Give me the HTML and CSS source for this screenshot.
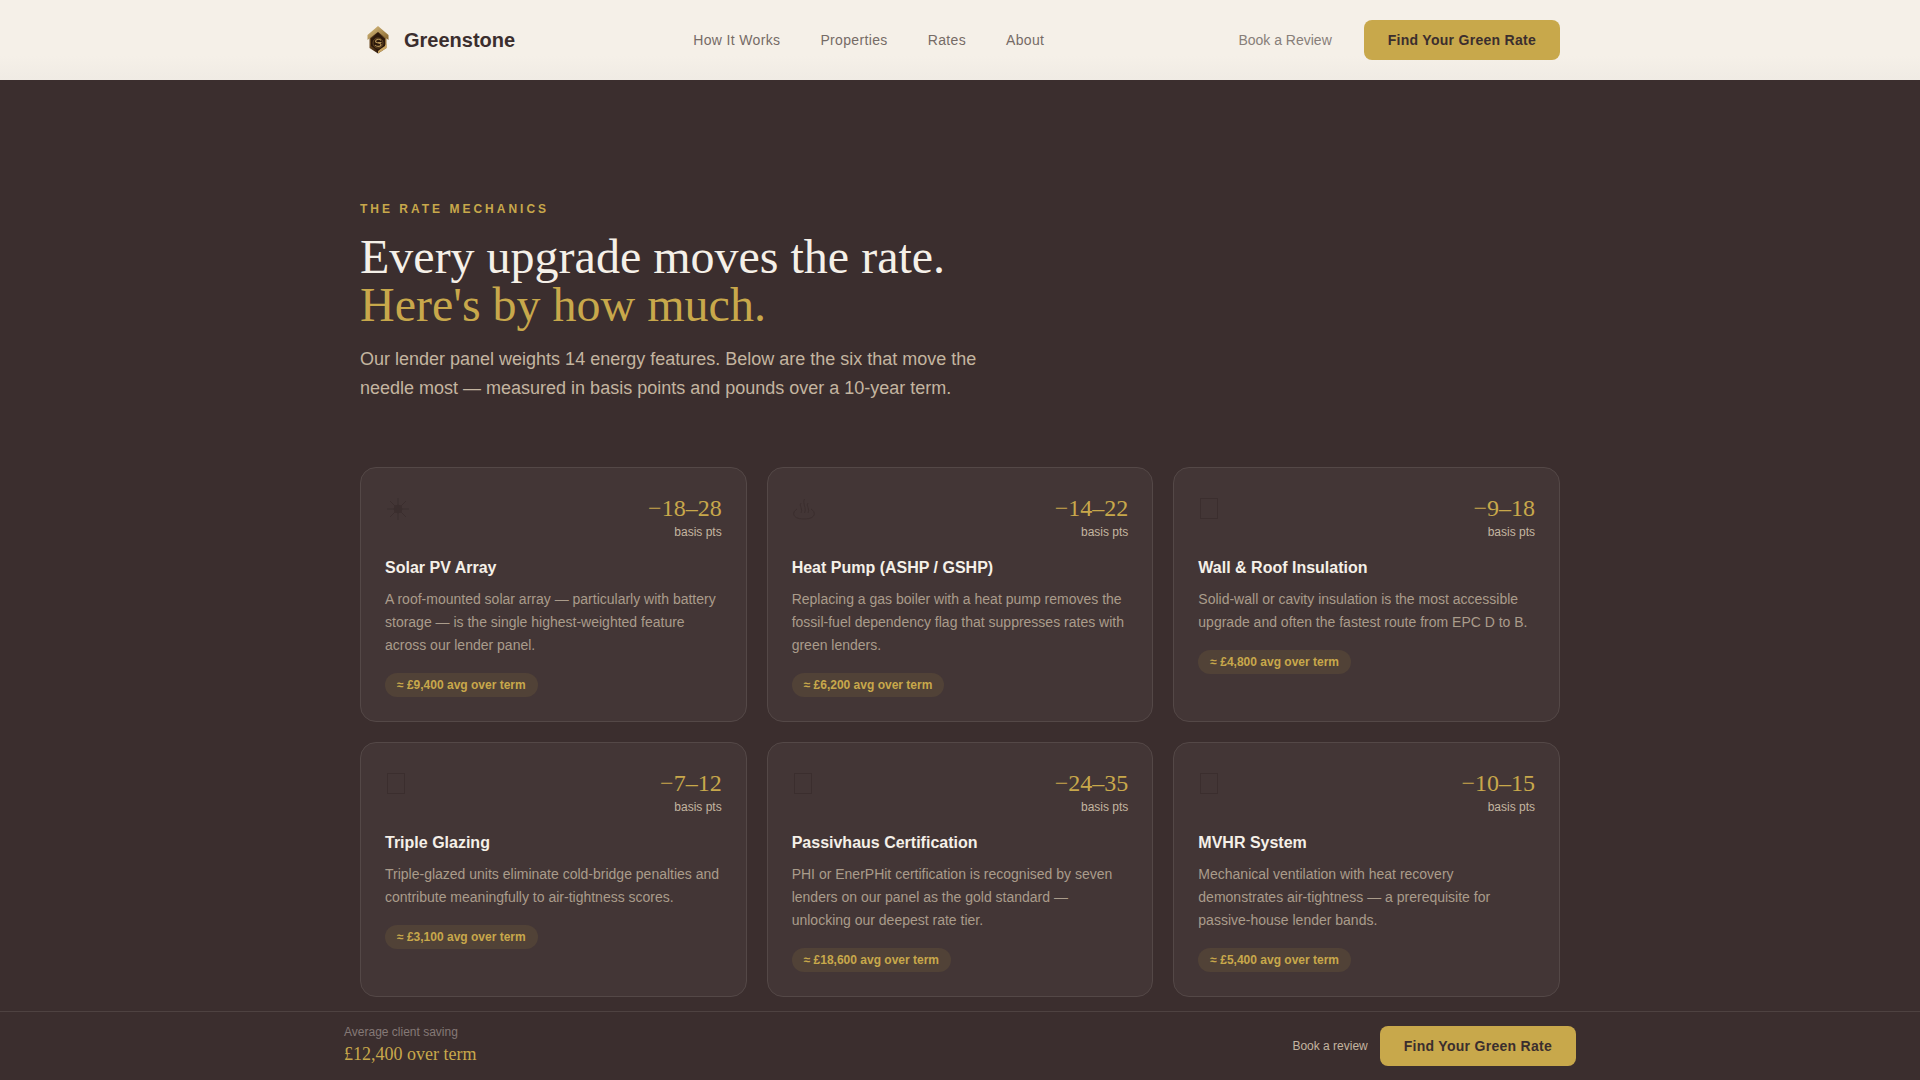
FILE: index.html
```html
<!DOCTYPE html>
<html lang="en">
  <head>
    <meta charset="UTF-8" />
    <meta name="viewport" content="width=device-width, initial-scale=1.0" />
    <title>Greenstone</title>
    <link rel="stylesheet" href="styles.css">
  </head>
  <body>
    <header class="site-header">
      <div class="header-inner">
        <a class="logo" href="#">
          <svg class="logo-mark" viewBox="0 0 36 36" aria-hidden="true">
            <defs>
              <linearGradient id="gold" x1="0" y1="0" x2="1" y2="1">
                <stop offset="0" stop-color="#dcc183" />
                <stop offset="1" stop-color="#86642c" />
              </linearGradient>
              <linearGradient id="shield" x1="0" y1="0" x2="1" y2="0">
                <stop offset="0" stop-color="#6b4a22" />
                <stop offset="0.5" stop-color="#2a160a" />
                <stop offset="1" stop-color="#9a7740" />
              </linearGradient>
            </defs>
            <path d="M9.500 14L18 8L26.500 14V26L18 31.500L9.500 26Z" fill="url(#shield)" />
            <path d="M26.500 22V26L18 31.500V29Z" fill="#c9a563" />
            <path d="M18 4L28.500 13V18L18 10L7.500 18V13Z" fill="url(#gold)" />
            <path d="M18 11L25 16.500V24L18 28.500L11 24V16.500Z" fill="#2c180b" />
            <circle cx="18" cy="21" r="5" fill="none" stroke="#6f5228" stroke-width="0.800" />
            <path d="M21 18.500C19.500 16.500 15.500 17 15.500 19.500C15.500 21.500 21 20.500 21 22.500C21 25 16.500 25 15 23M18 20.500H21.500" fill="none" stroke="#b39156" stroke-width="1.200" />
          </svg>
          <span>Greenstone</span>
        </a>
        <nav class="nav">
          <a href="#">How It Works</a>
          <a href="#">Properties</a>
          <a href="#">Rates</a>
          <a href="#">About</a>
        </nav>
        <div class="header-actions">
          <a class="review-link" href="#">Book a Review</a>
          <button class="btn" type="button">Find Your Green Rate</button>
        </div>
      </div>
    </header>

    <main class="mechanics">
      <p class="eyebrow">The Rate Mechanics</p>
      <h2>Every upgrade moves the rate.<br><span class="gold">Here's by how much.</span></h2>
      <p class="intro">
        Our lender panel weights 14 energy features. Below are the six that move
        the needle most — measured in basis points and pounds over a 10-year term.
      </p>

      <div class="cards">
        <article class="card">
          <div class="card-head">
            <svg class="icon" viewBox="0 0 24 32" aria-hidden="true">
              <circle class="solid" cx="13" cy="17" r="4" />
              <path d="M13 6V28M2 17H24M5 9L21 25M21 9L5 25" />
            </svg>
            <div class="points"><strong>−18–28</strong><span>basis pts</span></div>
          </div>
          <h3>Solar PV Array</h3>
          <p>A roof-mounted solar array — particularly with battery storage — is the single highest-weighted feature across our lender panel.</p>
          <span class="saving">≈ £9,400 avg over term</span>
        </article>

        <article class="card">
          <div class="card-head">
            <svg class="icon" viewBox="0 0 24 32" aria-hidden="true">
              <path d="M5 17C-1 21 1 27 12 27S25 21 19 17M9 11C7 14 11 17 9 21M12.500 7C10 11 15 16 12.500 21M16 11C14 14 18 17 16 21" />
            </svg>
            <div class="points"><strong>−14–22</strong><span>basis pts</span></div>
          </div>
          <h3>Heat Pump (ASHP / GSHP)</h3>
          <p>Replacing a gas boiler with a heat pump removes the fossil-fuel dependency flag that suppresses rates with green lenders.</p>
          <span class="saving">≈ £6,200 avg over term</span>
        </article>

        <article class="card">
          <div class="card-head">
            <svg class="icon" viewBox="0 0 24 32" aria-hidden="true"><rect x="2.500" y="6.500" width="17" height="20" /></svg>
            <div class="points"><strong>−9–18</strong><span>basis pts</span></div>
          </div>
          <h3>Wall &amp; Roof Insulation</h3>
          <p>Solid-wall or cavity insulation is the most accessible upgrade and often the fastest route from EPC D to B.</p>
          <span class="saving">≈ £4,800 avg over term</span>
        </article>

        <article class="card">
          <div class="card-head">
            <svg class="icon" viewBox="0 0 24 32" aria-hidden="true"><rect x="2.500" y="6.500" width="17" height="20" /></svg>
            <div class="points"><strong>−7–12</strong><span>basis pts</span></div>
          </div>
          <h3>Triple Glazing</h3>
          <p>Triple-glazed units eliminate cold-bridge penalties and contribute meaningfully to air-tightness scores.</p>
          <span class="saving">≈ £3,100 avg over term</span>
        </article>

        <article class="card">
          <div class="card-head">
            <svg class="icon" viewBox="0 0 24 32" aria-hidden="true"><rect x="2.500" y="6.500" width="17" height="20" /></svg>
            <div class="points"><strong>−24–35</strong><span>basis pts</span></div>
          </div>
          <h3>Passivhaus Certification</h3>
          <p>PHI or EnerPHit certification is recognised by seven lenders on our panel as the gold standard — unlocking our deepest rate tier.</p>
          <span class="saving">≈ £18,600 avg over term</span>
        </article>

        <article class="card">
          <div class="card-head">
            <svg class="icon" viewBox="0 0 24 32" aria-hidden="true"><rect x="2.500" y="6.500" width="17" height="20" /></svg>
            <div class="points"><strong>−10–15</strong><span>basis pts</span></div>
          </div>
          <h3>MVHR System</h3>
          <p>Mechanical ventilation with heat recovery demonstrates air-tightness — a prerequisite for passive-house lender bands.</p>
          <span class="saving">≈ £5,400 avg over term</span>
        </article>
      </div>
    </main>

    <aside class="sticky-bar">
      <div class="sticky-inner">
        <div class="average">
          <span class="average-label">Average client saving</span>
          <span class="average-value">£12,400 over term</span>
        </div>
        <div class="sticky-actions">
          <a href="#">Book a review</a>
          <button class="btn" type="button">Find Your Green Rate</button>
        </div>
      </div>
    </aside>
  </body>
</html>
```
FILE: styles.css
```css
* {
  box-sizing: border-box;
  margin: 0;
  padding: 0;
}
body {
  font-family: "Liberation Sans", Arial, sans-serif;
  background: #3b2e2e;
  color: #3b2e2e;
}
a {
  text-decoration: none;
  color: inherit;
}

/* Header */
.site-header {
  position: sticky;
  top: 0;
  z-index: 10;
  background: linear-gradient(#f5f0e8 70%, #f0ebe4);
}
.header-inner {
  max-width: 1248px;
  height: 80px;
  margin: 0 auto;
  padding: 0 24px;
  display: flex;
  align-items: center;
  justify-content: space-between;
}
.logo {
  display: flex;
  align-items: center;
  gap: 8px;
  font-size: 20px;
  font-weight: bold;
}
.logo-mark {
  width: 36px;
  height: 36px;
}
.nav {
  display: flex;
  gap: 40px;
  font-size: 14px;
  letter-spacing: 0.025em;
  color: #756b66;
}
.header-actions {
  display: flex;
  align-items: center;
  gap: 16px;
}
.review-link {
  padding: 0 16px;
  font-size: 14px;
  color: #877e79;
}
.btn {
  height: 40px;
  padding: 0 24px;
  border: none;
  border-radius: 8px;
  background: #c8a84b;
  color: #3b2e2e;
  font-family: inherit;
  font-size: 14px;
  font-weight: bold;
  letter-spacing: 0.02em;
  cursor: pointer;
}
.btn:hover {
  background: #d4b65c;
}

/* Rate mechanics */
.mechanics {
  max-width: 1248px;
  margin: 0 auto;
  padding: 120px 24px;
}
.eyebrow {
  margin-bottom: 14px;
  font-size: 12px;
  line-height: 19px;
  font-weight: bold;
  letter-spacing: 0.25em;
  text-transform: uppercase;
  color: #c8a84b;
}
h2 {
  margin-bottom: 16px;
  font-family: "Liberation Serif", "Times New Roman", serif;
  font-size: 48px;
  line-height: 48px;
  font-weight: normal;
  color: #f5f0e8;
}
.gold {
  color: #c8a84b;
}
.intro {
  max-width: 640px;
  margin-bottom: 64px;
  font-size: 18px;
  line-height: 29px;
  color: #c4b5a0;
}
.cards {
  display: grid;
  grid-template-columns: repeat(3, 1fr);
  gap: 20px;
}
.card {
  padding: 24px;
  border: 1px solid #544847;
  border-radius: 16px;
  background: #433636;
}
.card-head {
  display: flex;
  justify-content: space-between;
  align-items: flex-start;
  margin-bottom: 16px;
}
.icon {
  width: 24px;
  height: 32px;
  overflow: visible;
  fill: none;
  stroke: #3b2e2e;
}
.icon .solid {
  fill: #3b2e2e;
}
.points {
  display: flex;
  flex-direction: column;
  align-items: flex-end;
  font-size: 12px;
  line-height: 16px;
  color: #c4b5a0;
}
.points strong {
  font-family: "Liberation Serif", "Times New Roman", serif;
  font-size: 24px;
  line-height: 32px;
  font-weight: normal;
  color: #c8a84b;
}
.card h3 {
  margin-bottom: 8px;
  font-size: 16px;
  line-height: 24px;
  color: #f5f0e8;
}
.card p {
  margin-bottom: 16px;
  font-size: 14px;
  line-height: 23px;
  color: #aa9c8b;
}
.saving {
  display: block;
  width: fit-content;
  padding: 4px 12px;
  border-radius: 12px;
  background: #514237;
  font-size: 12px;
  line-height: 16px;
  font-weight: bold;
  color: #c8a84b;
}

/* Bottom bar */
.sticky-bar {
  position: fixed;
  left: 0;
  right: 0;
  bottom: 0;
  border-top: 1px solid #4e4241;
  background: #3b2e2e;
}
.sticky-inner {
  max-width: 1280px;
  margin: 0 auto;
  padding: 12px 24px;
  display: flex;
  align-items: center;
  justify-content: space-between;
}
.average {
  display: flex;
  flex-direction: column;
}
.average-label {
  font-size: 12px;
  line-height: 16px;
  color: #857976;
}
.average-value {
  font-family: "Liberation Serif", "Times New Roman", serif;
  font-size: 18px;
  line-height: 28px;
  color: #c8a84b;
}
.sticky-actions {
  display: flex;
  align-items: center;
  gap: 12px;
  font-size: 12px;
  color: #c4b5a0;
}
```
